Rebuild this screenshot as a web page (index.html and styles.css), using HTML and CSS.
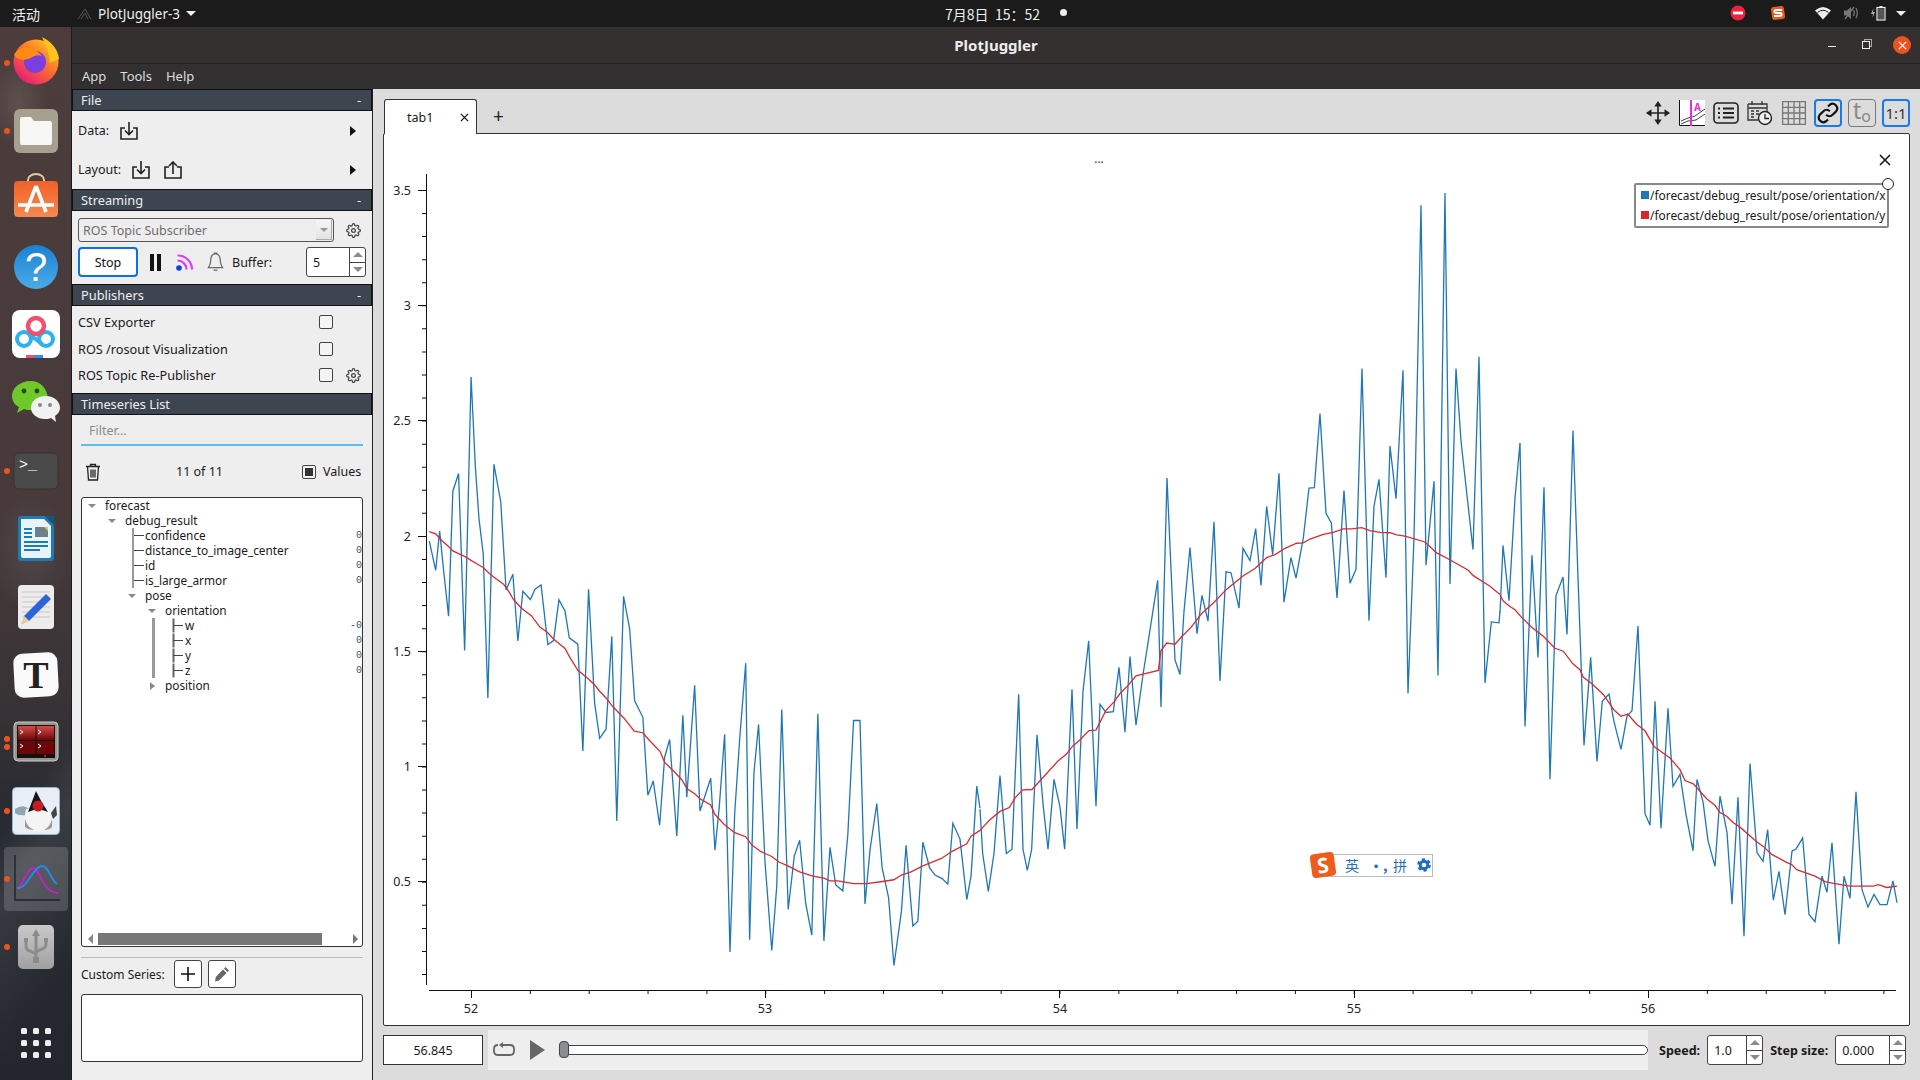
FILE: index.html
```html
<!DOCTYPE html>
<html lang="zh">
<head>
  <meta charset="UTF-8">
  <title>PlotJuggler</title>
  <link rel="stylesheet" href="styles.css">
</head>
<body>
  <!-- shared icons -->
  <svg class="defs">
    <defs>
      <linearGradient id="ffGrad" x1="1" y1="0" x2="0.2" y2="1">
        <stop offset="0" stop-color="#ffd91f"/><stop offset="0.5" stop-color="#ff6f2c"/><stop offset="1" stop-color="#e3177f"/>
      </linearGradient>
      <linearGradient id="shopGrad" x1="0" y1="0" x2="0" y2="1">
        <stop offset="0" stop-color="#f0602a"/><stop offset="1" stop-color="#f58a4f"/>
      </linearGradient>
      <linearGradient id="helpGrad" x1="0" y1="0" x2="0" y2="1">
        <stop offset="0" stop-color="#1b82d2"/><stop offset="1" stop-color="#4cabe8"/>
      </linearGradient>
      <linearGradient id="paneGrad" x1="0" y1="0" x2="0" y2="1">
        <stop offset="0" stop-color="#d84a4a"/><stop offset="1" stop-color="#6d0606"/>
      </linearGradient>
      <linearGradient id="usbGrad" x1="0" y1="0" x2="0" y2="1">
        <stop offset="0" stop-color="#c9c9c9"/><stop offset="1" stop-color="#a0a0a0"/>
      </linearGradient>
    </defs>
    <symbol id="gear" viewBox="0 0 24 24">
      <circle cx="12" cy="12" r="3" fill="none" stroke="currentColor" stroke-width="2"/>
      <path fill="none" stroke="currentColor" stroke-width="2" d="M19.4 15a1.65 1.65 0 0 0 .33 1.82l.06.06a2 2 0 0 1 0 2.83 2 2 0 0 1-2.83 0l-.06-.06a1.65 1.65 0 0 0-1.82-.33 1.65 1.65 0 0 0-1 1.51V21a2 2 0 0 1-2 2 2 2 0 0 1-2-2v-.09A1.65 1.65 0 0 0 9 19.4a1.65 1.65 0 0 0-1.82.33l-.06.06a2 2 0 0 1-2.83 0 2 2 0 0 1 0-2.83l.06-.06a1.65 1.65 0 0 0 .33-1.82 1.65 1.65 0 0 0-1.51-1H3a2 2 0 0 1-2-2 2 2 0 0 1 2-2h.09A1.65 1.65 0 0 0 4.6 9a1.65 1.65 0 0 0-.33-1.82l-.06-.06a2 2 0 0 1 0-2.83 2 2 0 0 1 2.83 0l.06.06a1.65 1.65 0 0 0 1.82.33H9a1.65 1.65 0 0 0 1-1.51V3a2 2 0 0 1 2-2 2 2 0 0 1 2 2v.09a1.65 1.65 0 0 0 1 1.51 1.65 1.65 0 0 0 1.82-.33l.06-.06a2 2 0 0 1 2.83 0 2 2 0 0 1 0 2.83l-.06.06a1.65 1.65 0 0 0-.33 1.82V9a1.65 1.65 0 0 0 1.51 1H21a2 2 0 0 1 2 2 2 2 0 0 1-2 2h-.09a1.65 1.65 0 0 0-1.51 1z"/>
    </symbol>
    <symbol id="tray-in" viewBox="0 0 18 18">
      <path fill="none" stroke="#222" stroke-width="1.6" d="M5 6H1V17H17V6H13M9 0V12.5M5 8.5L9 12.5L13 8.5"/>
    </symbol>
    <symbol id="tray-out" viewBox="0 0 18 18">
      <path fill="none" stroke="#222" stroke-width="1.6" d="M5 6H1V17H17V6H13M9 13V1M5 5L9 1L13 5"/>
    </symbol>
  </svg>

  <header class="topbar">
    <span class="top-activities">活动</span>
    <svg class="top-appicon" viewBox="0 0 14 12"><path fill="none" stroke="#555" d="M0 11L7 1L13 11M3 11L7 5L10 11"/></svg>
    <span class="top-app">PlotJuggler-3</span>
    <span class="caret"></span>
    <span class="top-clock">7月8日&nbsp;&nbsp;15：52</span>
    <span class="top-dot"></span>
    <div class="tray">
      <svg class="tray-ic" viewBox="0 0 16 16"><circle cx="8" cy="8" r="7.5" fill="#e8243f"/><rect x="3" y="6.6" width="10" height="2.8" fill="#fff"/></svg>
      <svg class="tray-ic sogou-tray" viewBox="0 0 16 16"><rect x="1.5" y="1.5" width="13" height="13" rx="2.5" fill="#ea5a1e" transform="rotate(-8 8 8)"/><path fill="none" stroke="#fff" stroke-width="2" d="M12 5H6Q4 5 4.500 7Q5 8 8 8H10Q12 8 11.500 10Q11 11 9 11H4"/></svg>
      <svg class="tray-ic wifi" viewBox="0 0 16 14"><path fill="#eee" d="M0 4.500Q8 -2.500 16 4.500L8 13.500z"/><path fill="none" stroke="#1c1c1c" d="M2.500 6.500Q8 2 13.500 6.500"/></svg>
      <svg class="tray-ic mute" viewBox="0 0 16 16"><path fill="#777" d="M1 5.500H4L8 2V14L4 10.500H1z"/><path fill="none" stroke="#777" stroke-width="1.300" d="M10.500 5Q12 8 10.500 11M13 3Q15.500 8 13 13M2 14L11 2"/></svg>
      <svg class="tray-ic batt" viewBox="0 0 16 16"><path fill="#aaa" d="M2.500 3L0 9H2L1.500 13L4 7H2z"/><rect x="6" y="2.500" width="8" height="12.500" fill="none" stroke="#eee" stroke-width="1.200"/><rect x="8.500" y="1" width="3" height="1.500" fill="#eee"/><rect x="7" y="3.500" width="6" height="10.500" fill="#ddd" opacity=".3"/></svg>
      <span class="caret"></span>
    </div>
  </header>

  <div class="desk">
    <nav class="dock">
      <div class="dock-item running first">
        <svg class="dock-ic" viewBox="0 0 56 56">
          <circle cx="28" cy="29" r="22.500" fill="url(#ffGrad)"/>
          <path fill="#ffc21f" d="M34 4C42 8 50 15 51 26L42 30C41 20 38 12 34 4z"/>
          <circle cx="27" cy="29" r="11" fill="#7a3fdc"/>
          <path fill="#ff8a14" d="M6 22C10 14 18 13 24 16C29 18 32 20 34 23C29 21 25 24 20 26C14 28 9 26 6 22z"/>
        </svg>
      </div>
      <div class="dock-item running">
        <svg class="dock-ic" viewBox="0 0 56 56">
          <rect x="6" y="6" width="44" height="44" rx="6" fill="#a5a08f"/>
          <path fill="#f7f7f5" d="M12 16a2 2 0 0 1 2-2h9l3 4h16a2 2 0 0 1 2 2v20a2 2 0 0 1-2 2H14a2 2 0 0 1-2-2z"/>
        </svg>
      </div>
      <div class="dock-item">
        <svg class="dock-ic" viewBox="0 0 56 56">
          <path fill="none" stroke="#e8c9a0" stroke-width="2" d="M20 11V9A8 6 0 0 1 36 9V11"/>
          <rect x="6" y="10" width="44" height="36" rx="4" fill="url(#shopGrad)"/>
          <path fill="none" stroke="#fff" stroke-width="3.600" d="M28 15L18 41M28 15L38 41M10 34H46"/>
        </svg>
      </div>
      <div class="dock-item">
        <svg class="dock-ic" viewBox="0 0 56 56">
          <circle cx="28" cy="28" r="22" fill="url(#helpGrad)"/>
          <text class="help-mark" x="28" y="42" text-anchor="middle">?</text>
        </svg>
      </div>
      <div class="dock-item">
        <svg class="dock-ic" viewBox="0 0 56 56">
          <rect x="4" y="3" width="48" height="48" rx="8" fill="#fff"/>
          <circle cx="16" cy="32" r="7" fill="none" stroke="#2eb2ef" stroke-width="4"/>
          <circle cx="38" cy="32" r="7" fill="none" stroke="#2eb2ef" stroke-width="4"/>
          <path fill="none" stroke="#2eb2ef" stroke-width="4" d="M21 27L34 37"/>
          <circle cx="28" cy="19" r="8" fill="none" stroke="#f0506e" stroke-width="4.500"/>
          <rect x="18" y="48" width="8" height="3" fill="#f0506e"/><rect x="26" y="48" width="9" height="3" fill="#2e8fef"/>
        </svg>
      </div>
      <div class="dock-item">
        <svg class="dock-ic wechat" viewBox="0 0 56 56">
          <path fill="#6fc92b" d="M23 5C12 5 4 12 4 20C4 25 7 29 11 31L9 37L16 33C18 34 21 34 24 34L40 22C39 12 32 5 23 5z"/>
          <circle cx="16" cy="15" r="2.400" fill="#1d4d10"/><circle cx="29" cy="15" r="2.400" fill="#1d4d10"/>
          <path fill="#f1f1f1" d="M38 20C28 20 23 26 23 32C23 38 29 43 37 43C39 43 41 43 43 42L48 46L47 40C50 38 52 35 52 32C52 25 46 20 38 20z"/>
          <circle cx="32" cy="29" r="2" fill="#888"/><circle cx="42" cy="29" r="2" fill="#888"/>
        </svg>
      </div>
      <div class="dock-item running">
        <svg class="dock-ic" viewBox="0 0 56 56">
          <rect x="6" y="10" width="44" height="36" rx="5" fill="#4a4a4a" stroke="#333"/>
          <text class="term-mark" x="11" y="26">&gt;_</text>
        </svg>
      </div>
      <div class="dock-item">
        <svg class="dock-ic" viewBox="0 0 56 56">
          <path fill="#1c7cb5" d="M12 5H37L46 14V47A3 3 0 0 1 43 50H13A3 3 0 0 1 10 47V8A3 3 0 0 1 12 5z"/>
          <path fill="#e9f3fa" d="M13 8H36L43 15V45Q43 47 41 47H15Q13 47 13 45z"/>
          <path fill="#13577f" d="M38 5H46V14z"/>
          <path fill="none" stroke="#1c7cb5" stroke-width="1.800" d="M16 18H24M16 22H24M16 26H24M16 31H40M16 35H40M16 39H32"/>
          <rect x="27" y="16" width="13" height="10" fill="#6b7f8c"/><path fill="#e8c23a" d="M36 16H40V20z"/>
        </svg>
      </div>
      <div class="dock-item">
        <svg class="dock-ic" viewBox="0 0 56 56">
          <rect x="10" y="6" width="36" height="44" rx="4" fill="#ececec"/>
          <path fill="none" stroke="#c8c8c8" d="M14 13H42M14 18H42M14 23H42M14 28H42M14 33H42M14 38H42"/>
          <path fill="#2d62d8" d="M38 15L43 20L21 42L16 37z"/><path fill="#e9c99a" d="M16 37L21 42L13 46z"/>
        </svg>
      </div>
      <div class="dock-item">
        <svg class="dock-ic" viewBox="0 0 56 56">
          <rect x="6" y="6" width="44" height="44" rx="9" fill="#fafafa" transform="rotate(-3 28 28)"/>
          <text class="type-mark" x="28" y="41" text-anchor="middle">T</text>
        </svg>
      </div>
      <div class="dock-item running twin">
        <svg class="dock-ic" viewBox="0 0 56 56">
          <rect x="6" y="7" width="44" height="39" rx="4" fill="#9a958c" stroke="#ccc"/>
          <rect x="9" y="10" width="38" height="33" fill="#111"/>
          <rect x="10" y="11" width="17.500" height="14" fill="url(#paneGrad)"/><rect x="28.500" y="11" width="17.500" height="14" fill="url(#paneGrad)"/>
          <rect x="10" y="26" width="17.500" height="13" fill="#6d0606"/><rect x="28.500" y="26" width="17.500" height="13" fill="#6d0606"/>
          <circle cx="37" cy="41" r="1" fill="#f22"/>
          <path fill="none" stroke="#fff" d="M12 15L15 17L12 19M30 15L33 17L30 19M12 29L15 31L12 33M30 29L33 31L30 33"/>
        </svg>
      </div>
      <div class="dock-item running">
        <svg class="dock-ic" viewBox="0 0 56 56">
          <rect x="4.500" y="4.500" width="47" height="47" rx="4" fill="#e8eef6" stroke="#9db4cc"/>
          <path fill="#8fa5b5" d="M7 26Q14 21 20 25L18 32Q10 33 7 30z"/>
          <path fill="#f4f4f4" d="M18 26H40Q45 36 44 44Q38 48 30 48Q22 48 17 44Q16 34 18 26z"/>
          <path fill="#9a9a9a" d="M17 36Q19 44 26 47Q20 47 17 44zM44 36Q42 44 36 47Q42 47 44 44z"/>
          <path fill="#15151b" d="M20 29L28 8Q33 19 40 29Q30 24 20 29z"/>
          <circle cx="30" cy="23" r="5.500" fill="#c41e24"/>
          <path fill="#444" d="M43 30L48 23L49 32L45 36z"/>
        </svg>
      </div>
      <div class="dock-item running active">
        <svg class="dock-ic" viewBox="-4 -4 64 64">
          <path fill="none" stroke="#2b2d3a" stroke-width="1.800" d="M7 4V49H52"/>
          <path fill="none" stroke="#c81ed0" stroke-width="1.800" d="M9 37C15 36 18 18 25 17C32 16 33 41 50 42"/>
          <path fill="none" stroke="#1e8cf0" stroke-width="1.800" d="M9 37C20 38 25 15 34 15C41 15 43 30 49 33"/>
        </svg>
      </div>
      <div class="dock-item running">
        <svg class="dock-ic" viewBox="0 0 56 56">
          <rect x="10" y="6" width="36" height="44" rx="5" fill="url(#usbGrad)"/>
          <path fill="none" stroke="#8b8b8b" stroke-width="3" d="M28 16V40M18 22V27Q18 31 22 32L28 35M38 22V25Q38 29 34 30L28 33"/>
          <path fill="#8b8b8b" d="M28 10L32 17H24zM25 38H31V44H25zM16 19H20V23H16zM36 19H40V23H36z"/>
        </svg>
      </div>
      <div class="dock-item apps">
        <svg class="dock-ic" viewBox="0 0 56 56">
          <g fill="#eee">
            <rect x="13" y="13" width="6" height="6" rx="1.500"/><rect x="25" y="13" width="6" height="6" rx="1.500"/><rect x="37" y="13" width="6" height="6" rx="1.500"/>
            <rect x="13" y="25" width="6" height="6" rx="1.500"/><rect x="25" y="25" width="6" height="6" rx="1.500"/><rect x="37" y="25" width="6" height="6" rx="1.500"/>
            <rect x="13" y="37" width="6" height="6" rx="1.500"/><rect x="25" y="37" width="6" height="6" rx="1.500"/><rect x="37" y="37" width="6" height="6" rx="1.500"/>
          </g>
        </svg>
      </div>
    </nav>

    <div class="window">
      <div class="titlebar">
        <span></span>
        <span class="title">PlotJuggler</span>
        <div class="win-buttons">
          <span class="win-min"></span>
          <span class="win-max"></span>
          <span class="win-close">
            <svg viewBox="0 0 10 10"><path fill="none" stroke="#fff" stroke-width="1.400" d="M1 1L9 9M9 1L1 9"/></svg>
          </span>
        </div>
      </div>
      <div class="menubar">
        <span>App</span><span>Tools</span><span>Help</span>
      </div>

      <div class="content">
        <aside class="side">
          <div class="sec-head"><span>File</span><span>-</span></div>
          <div class="file-row">
            <span>Data:</span>
            <svg class="tray-btn data-btn"><use href="#tray-in"/></svg>
            <span class="more"></span>
          </div>
          <div class="file-row">
            <span>Layout:</span>
            <svg class="tray-btn layout-btn"><use href="#tray-in"/></svg>
            <svg class="tray-btn layout-btn"><use href="#tray-out"/></svg>
            <span class="more"></span>
          </div>

          <div class="sec-head"><span>Streaming</span><span>-</span></div>
          <div class="stream-top">
            <div class="combo"><span>ROS Topic Subscriber</span><span class="combo-arrow"></span></div>
            <svg class="gear"><use href="#gear"/></svg>
          </div>
          <div class="stream-ctrl">
            <button class="stop">Stop</button>
            <span class="pause"></span>
            <svg class="live" viewBox="0 0 20 20">
              <circle cx="4" cy="16" r="2.800" fill="#0b3cf0"/>
              <path fill="none" stroke="#e23af0" stroke-width="2.200" d="M2.500 8.500A9 9 0 0 1 11.500 17.500M2.500 3.500A14 14 0 0 1 17 17.500"/>
            </svg>
            <svg class="bell" viewBox="0 0 18 22">
              <path fill="none" stroke="#666" stroke-width="1.300" d="M9 2.500C5 2.500 4 6 4 9C4 13 3 15 1.500 17H16.500C15 15 14 13 14 9C14 6 13 2.500 9 2.500zM7 1.500H11M7 19.500H11"/>
            </svg>
            <span class="buffer-label">Buffer:</span>
            <div class="spin buffer-spin">
              <span class="spin-val">5</span>
              <span class="spin-btns"><i class="up"></i><i class="down"></i></span>
            </div>
          </div>

          <div class="sec-head"><span>Publishers</span><span>-</span></div>
          <div class="pub-list">
            <div class="pub-row"><span>CSV Exporter</span><span class="check"></span></div>
            <div class="pub-row"><span>ROS /rosout Visualization</span><span class="check"></span></div>
            <div class="pub-row"><span>ROS Topic Re-Publisher</span><span class="check"></span><svg class="gear pub-gear"><use href="#gear"/></svg></div>
          </div>

          <div class="sec-head plain"><span>Timeseries List</span></div>
          <div class="filter">Filter...</div>
          <div class="list-ctrl">
            <svg class="trash" viewBox="0 0 16 18">
              <path fill="none" stroke="#222" stroke-width="1.300" d="M1 3.500H15M5.500 3.500V1.500H10.500V3.500M2.500 3.500L3.500 17H12.500L13.500 3.500M6 6.500V14.500M8 6.500V14.500M10 6.500V14.500"/>
            </svg>
            <span class="count">11 of 11</span>
            <span class="check checked"></span>
            <span class="values">Values</span>
          </div>

          <div class="tree">
            <div class="rows">
              <div class="row d0"><i class="arrow"></i>forecast</div>
              <div class="row d1"><i class="arrow"></i>debug_result</div>
              <div class="row d2 leaf">confidence<span class="val">0</span></div>
              <div class="row d2 leaf">distance_to_image_center<span class="val">0</span></div>
              <div class="row d2 leaf">id<span class="val">0</span></div>
              <div class="row d2 leaf">is_large_armor<span class="val">0</span></div>
              <div class="row d2"><i class="arrow"></i>pose</div>
              <div class="row d3"><i class="arrow"></i>orientation</div>
              <div class="row d4 leaf">w<span class="val">-0</span></div>
              <div class="row d4 leaf">x<span class="val">0</span></div>
              <div class="row d4 leaf">y<span class="val">0</span></div>
              <div class="row d4 leaf last">z<span class="val">0</span></div>
              <div class="row d3"><i class="arrow closed"></i>position</div>
            </div>
            <div class="hscroll">
              <i class="sb-left"></i>
              <span class="sb-thumb"></span>
              <i class="sb-right"></i>
            </div>
          </div>
          <div class="sep"></div>
          <div class="custom">
            <span class="custom-label">Custom Series:</span>
            <span class="tool-btn">
              <svg viewBox="0 0 16 16"><path fill="none" stroke="#111" stroke-width="1.600" d="M8 1V15M1 8H15"/></svg>
            </span>
            <span class="tool-btn">
              <svg viewBox="0 0 16 16"><path fill="#666" d="M11.500 1L15 4.500L13.500 6L10 2.500zM9 3.500L12.500 7L5 14.500L1 15.500L1.800 11z"/></svg>
            </span>
          </div>
          <div class="custom-list"></div>
        </aside>

        <main class="work">
          <div class="tabbar">
            <div class="tab">
              <span>tab1</span>
              <svg class="tab-x" viewBox="0 0 10 10"><path fill="none" stroke="#111" stroke-width="1.400" d="M1 1L9 9M9 1L1 9"/></svg>
            </div>
            <span class="tab-add">+</span>
            <div class="tools">
              <span class="t-ic">
                <svg viewBox="0 0 28 28"><path fill="none" stroke="#222" stroke-width="1.800" d="M14 3V25M3 14H25"/><path fill="#222" d="M14 1L18 7H10zM14 27L18 21H10zM1 14L7 10V18zM27 14L21 10V18z"/></svg>
              </span>
              <span class="t-ic">
                <svg viewBox="0 0 26 26"><rect width="26" height="26" fill="#fff"/><path fill="none" stroke="#111" stroke-width="1" d="M.5 0V25.500H26"/><path fill="none" stroke="#444" stroke-width="1" d="M2 21L9 18L16 16L26 9M2 24L9 21L17 20L26 14"/><path fill="none" stroke="#e62de6" stroke-width="2" d="M12 0V26"/><text class="chart-a" x="15" y="11">A</text></svg>
              </span>
              <span class="t-ic">
                <svg viewBox="0 0 26 22"><rect x="1" y="1" width="24" height="20" rx="3.500" fill="none" stroke="#222" stroke-width="1.600"/><path fill="none" stroke="#222" stroke-width="2" d="M5 6.500H7M10 6.500H21M5 11H7M10 11H21M5 15.500H7M10 15.500H21"/></svg>
              </span>
              <span class="t-ic">
                <svg viewBox="0 0 26 26"><path fill="none" stroke="#333" stroke-width="1.300" d="M1 4H20V12M1 4V20H11M1 8H20M5 1V5M15 1V5M4 11H7M9 11H12M4 14H7M9 14H12M4 17H7"/><circle cx="18" cy="18" r="6.500" fill="#eee" stroke="#222" stroke-width="1.400"/><path fill="none" stroke="#222" stroke-width="1.300" d="M18 14V18.500H22"/></svg>
              </span>
              <span class="t-ic">
                <svg viewBox="0 0 24 24"><path fill="none" stroke="#777" stroke-width="1.200" d="M1.500 1.500H22.500V22.500H1.500zM6.750 1.500V22.500M12 1.500V22.500M17.250 1.500V22.500M1.500 6.750H22.500M1.500 12H22.500M1.500 17.250H22.500"/></svg>
              </span>
              <span class="t-ic boxed on">
                <svg viewBox="0 0 24 24"><path fill="none" stroke="#111" stroke-width="2.400" d="M10 14A5 5 0 0 0 17 14L21 10A5 5 0 0 0 14 3L12 5M14 10A5 5 0 0 0 7 10L3 14A5 5 0 0 0 10 21L12 19"/></svg>
              </span>
              <span class="t-ic boxed off"><span class="t-zero">t<small>o</small></span></span>
              <span class="t-ic boxed on"><span class="t-ratio">1:1</span></span>
            </div>
          </div>

          <div class="frame">
            <svg class="plot" viewBox="383 133 1527 893">
              <!-- axes -->
              <g class="axis">
                <path d="M426.500 174V985M429 990.500H1896"/>
                <path d="M418 190.500H426M418 305.500H426M418 420.500H426M418 536.500H426M418 651.500H426M418 766.500H426M418 881.500H426"/>
                <path d="M471.500 990V998M765.500 990V998M1059.500 990V998M1354.500 990V998M1648.500 990V998"/>
                <line class="minor-y" x1="424" y1="190" x2="424" y2="975" stroke-width="4"/>
                <line class="minor-x" x1="471" y1="992" x2="1896" y2="992" stroke-width="4"/>
              </g>
              <g class="ticks-y" text-anchor="end">
                <text x="411" y="195">3.5</text>
                <text x="411" y="310">3</text>
                <text x="411" y="425">2.5</text>
                <text x="411" y="541">2</text>
                <text x="411" y="656">1.5</text>
                <text x="411" y="771">1</text>
                <text x="411" y="886">0.5</text>
              </g>
              <g class="ticks-x" text-anchor="middle">
                <text x="471" y="1013">52</text>
                <text x="765" y="1013">53</text>
                <text x="1060" y="1013">54</text>
                <text x="1354" y="1013">55</text>
                <text x="1648" y="1013">56</text>
              </g>
              <text class="dots" x="1099" y="163" text-anchor="middle">...</text>

              <!-- series x -->
              <g class="line-x">
                <polyline transform="translate(420 360) scale(.35714 .39526)" points="26,458 44,532 55,433 67,540 80,648 92,332 108,287 125,735 143,43 155,270 165,400 177,490 190,855 207,264 226,358 241,582 260,542 274,711 288,585 309,606 322,580 339,569 358,720 374,710 389,607 406,635 418,703 442,719 456,989 472,580 489,868 503,957 521,934 537,699 551,1166 570,598 587,680 601,862 624,904 638,1101 653,1065 671,1177 685,1005 699,960 719,1204 736,899 747,1106 769,823 784,1141 814,1058 826,1240 838,1130 853,947 868,1498 881,1150 895,960 912,767 923,1467 935,1045 948,922 966,1270 985,1494 999,1330 1013,884 1031,1390 1048,1255 1063,1215 1080,1375 1097,1455 1114,895 1131,1470 1148,1233 1164,1328 1184,1343 1198,1200 1214,912 1232,912 1246,1376 1260,1240 1279,1122 1294,1285 1312,1360 1327,1532 1348,1395 1361,1228 1380,1432 1394,1420 1408,1220 1427,1285 1442,1303 1462,1312 1478,1326 1492,1172 1512,1212 1531,1365 1543,1305 1559,1078 1568,1134"/>
                <polyline transform="translate(980 180) scale(.33333 .42092)" points="0,1495 8,1600 25,1690 42,1600 60,1415 79,1600 96,1590 116,1222 129,1590 142,1640 155,1590 171,1318 190,1490 204,1590 222,1424 240,1490 254,1590 276,1210 291,1542 309,1215 326,1095 348,1488 360,1246 378,1265 400,1263 417,1158 435,1312 450,1132 468,1295 490,1170 505,1095 533,951 543,1252 561,708 585,1140 600,1175 612,1025 630,873 651,1078 666,987 684,1048 702,812 720,1190 738,931 753,933 777,1017 789,875 810,904 827,828 843,963 860,775 878,890 897,697 912,1003 933,897 948,946 970,850 987,732 1003,731 1020,555 1038,792 1054,815 1071,993 1092,738 1110,958 1128,925 1146,448 1167,1047 1182,775 1197,711 1218,945 1230,632 1248,757 1269,452 1284,1220 1302,850 1323,60 1338,915 1362,716 1374,1177 1395,31 1410,960 1428,448 1443,620 1479,878 1497,420 1515,1195 1534,1050 1557,1052 1560,1025"/>
                <polyline transform="translate(1500 400) scale(.33333 .36352)" points="0,585 9,400 27,552 45,270 60,118 75,898 96,427 114,708 132,240 150,1043 168,538 189,487 201,645 219,84 234,490 252,950 272,708 291,994 307,828 327,809 342,885 363,961 381,870 396,855 414,622 435,1138 450,1170 465,829 483,1178 504,848 519,1063 540,1030 558,1140 579,1240 591,1044 609,1105 624,1212 645,1283 660,1090 681,1190 696,1387 714,1093 732,1475 750,1000 771,1245 789,1269 803,1182 820,1376 837,1297 855,1416 876,1241 888,1235 908,1205 927,1415 945,1435 966,1310 981,1354 996,1218 1017,1497 1032,1310 1050,1371 1068,1078 1086,1347 1104,1395 1122,1360 1140,1388 1161,1388 1179,1323 1191,1383"/>
              </g>
              <!-- series y -->
              <g class="line-y">
                <polyline transform="translate(420 360) scale(.35714 .39526)" points="26,434 44,440 62,458 80,472 92,483 108,490 125,497 143,507 160,516 177,525 195,541 212,553 234,567 248,585 262,606 282,626 296,636 312,647 335,675 358,690 374,706 389,717 406,730 420,753 442,785 470,806 490,823 503,838 521,855 541,878 570,905 600,939 624,943 640,960 672,990 685,1018 710,1040 733,1062 748,1085 770,1098 784,1110 814,1126 826,1150 852,1175 881,1196 912,1206 930,1228 955,1244 985,1256 1005,1270 1030,1280 1063,1295 1100,1306 1131,1311 1148,1318 1170,1318 1214,1325 1250,1325 1290,1320 1327,1315 1348,1303 1375,1295 1408,1280 1460,1261 1490,1243 1531,1224 1543,1205 1568,1190"/>
                <polyline transform="translate(980 180) scale(.33333 .42092)" points="0,1545 28,1521 60,1500 88,1491 105,1468 128,1449 156,1448 200,1410 234,1380 258,1365 278,1345 300,1330 327,1308 348,1307 378,1260 402,1240 420,1220 445,1200 468,1178 535,1165 543,1118 560,1100 585,1103 605,1085 633,1063 665,1030 700,1005 740,972 790,940 825,923 860,897 885,890 915,875 950,863 970,862 990,853 1030,842 1060,837 1090,829 1115,829 1145,826 1170,833 1200,837 1230,838 1250,843 1275,846 1335,860 1370,886 1400,898 1465,927 1480,940 1530,965 1560,985"/>
                <polyline transform="translate(1500 400) scale(.33333 .36352)" points="0,537 10,553 30,568 45,577 65,598 95,625 130,650 165,683 190,691 218,725 240,742 250,763 275,780 310,810 342,853 363,870 383,864 410,892 435,910 462,953 510,985 540,1017 555,1047 580,1056 620,1097 645,1115 660,1135 680,1145 700,1163 720,1175 770,1215 790,1228 815,1250 860,1272 875,1278 890,1292 945,1310 975,1325 1000,1330 1050,1337 1120,1337 1135,1333 1160,1341 1191,1337"/>
              </g>
            </svg>

            <svg class="plot-close" viewBox="0 0 12 12"><path fill="none" stroke="#111" stroke-width="1.500" d="M1 1L11 11M11 1L1 11"/></svg>

            <div class="legend">
              <div class="legend-row"><i class="sw-x"></i>/forecast/debug_result/pose/orientation/x</div>
              <div class="legend-row"><i class="sw-y"></i>/forecast/debug_result/pose/orientation/y</div>
              <span class="legend-knob"></span>
            </div>

            <div class="ime">
              <span class="ime-logo">S</span>
              <div class="ime-bar">
                <span>英</span>
                <span class="ime-punct">•,</span>
                <span>拼</span>
                <svg viewBox="0 0 24 24"><circle cx="12" cy="12" r="6.500" fill="none" stroke="#1b6fc2" stroke-width="5"/><circle cx="12" cy="12" r="10" fill="none" stroke="#1b6fc2" stroke-width="3.500" stroke-dasharray="5.500 5"/></svg>
              </div>
            </div>
          </div>

          <div class="bottom">
            <div class="time-box">56.845</div>
            <div class="player">
              <svg class="loop" viewBox="0 0 22 16"><path fill="none" stroke="#666" stroke-width="1.800" d="M7 3H17Q21 3 21 7V9Q21 13 17 13H5Q1 13 1 9V7Q1 3 5 3"/><path fill="#666" d="M10 0L6 3L10 6z"/></svg>
              <svg class="play" viewBox="0 0 15 20"><path fill="#666" d="M0 0L15 10L0 20z"/></svg>
              <div class="slider"><span class="handle"></span></div>
            </div>
            <span class="b-label speed-label">Speed:</span>
            <div class="spin speed-spin">
              <span class="spin-val">1.0</span>
              <span class="spin-btns"><i class="up"></i><i class="down"></i></span>
            </div>
            <span class="b-label step-label">Step size:</span>
            <div class="spin step-spin">
              <span class="spin-val">0.000</span>
              <span class="spin-btns"><i class="up"></i><i class="down"></i></span>
            </div>
          </div>
        </main>
      </div>
    </div>
  </div>
</body>
</html>
```

FILE: styles.css
```css
/* Page */
html, body {
  margin: 0;
  padding: 0;
  width: 1920px;
  height: 1080px;
  overflow: hidden;
}
body {
  font-family: "Noto Sans", "Noto Sans CJK SC", sans-serif;
  font-size: 13px;
  color: #1a1a1a;
  background: #222;
}
.defs {
  position: absolute;
  width: 0;
  height: 0;
}

/* Top bar */
.topbar {
  height: 27px;
  background: #1b1b1b;
  color: #eee;
  display: flex;
  align-items: center;
  font-size: 14px;
}
.top-activities {
  margin-left: 12px;
  font-family: "Noto Sans CJK SC", sans-serif;
  width: 64px;
}
.top-appicon {
  width: 14px;
  height: 12px;
  margin-left: 2px;
}
.top-app {
  margin-left: 6px;
  font-size: 13.500px;
}
.caret {
  width: 0;
  height: 0;
  margin-left: 6px;
  border-left: 5px solid transparent;
  border-right: 5px solid transparent;
  border-top: 5px solid #eee;
}
.top-clock {
  margin-left: 749px;
  font-family: "Noto Sans CJK SC", sans-serif;
  width: 115px;
  font-size: 14px;
  white-space: nowrap;
}
.top-dot {
  width: 7px;
  height: 7px;
  border-radius: 50%;
  background: #eee;
  margin-bottom: 2px;
}
.tray {
  margin-left: auto;
  display: flex;
  align-items: center;
  margin-right: 14px;
}
.tray .caret { margin-left: 9px; }
.tray-ic {
  width: 16px;
  height: 16px;
  margin-bottom: 2px;
}
.sogou-tray { margin-left: 24px; }
.wifi { margin-left: 29px; }
.mute { margin-left: 12px; }
.batt { margin-left: 12px; }

/* Dock */
.desk {
  display: flex;
  height: 1053px;
}
.dock {
  width: 72px;
  flex: none;
  padding-top: 2px;
  box-sizing: border-box;
  background:
    radial-gradient(ellipse 30px 45px at 18px 75px, rgba(255,255,255,0.10), transparent),
    radial-gradient(ellipse 40px 60px at 30px 525px, rgba(255,255,255,0.07), transparent),
    linear-gradient(125deg, transparent 70%, rgba(255,255,255,0.08) 76%, transparent 90%),
    linear-gradient(180deg, #4c3d3c 0, #483a3b 45%, #3a3436 62%, #282b31 75%, #23272d 100%);
  border-right: 1px solid #1a1a1a;
}
.dock-item {
  height: 68px;
  display: flex;
  align-items: center;
  justify-content: center;
  position: relative;
}
.dock-ic {
  width: 56px;
  height: 56px;
}
.first .dock-ic { margin-top: -4px; }
.wechat { margin-top: 2px; }
.running::before {
  content: "";
  position: absolute;
  left: 4px;
  top: 31px;
  width: 6px;
  height: 6px;
  border-radius: 50%;
  background: #e95420;
}
.twin::after {
  content: "";
  position: absolute;
  left: 4px;
  top: 35px;
  width: 6px;
  height: 6px;
  border-radius: 50%;
  background: #e95420;
}
.twin::before { top: 27px; }
.active .dock-ic {
  width: 64px;
  height: 64px;
  border-radius: 4px;
  background: rgba(255,255,255,0.16);
}
.apps { margin-top: 28px; }
.help-mark {
  font-family: "Liberation Sans", sans-serif;
  font-size: 40px;
  fill: #fff;
}
.term-mark {
  font-family: "Liberation Mono", monospace;
  font-size: 15px;
  fill: #fff;
}
.type-mark {
  font-family: "Liberation Serif", serif;
  font-size: 38px;
  font-weight: bold;
  fill: #222;
}

/* Window chrome */
.window {
  flex: 1;
  display: flex;
  flex-direction: column;
  min-width: 0;
}
.titlebar {
  height: 36px;
  background: #33302f;
  border-bottom: 1px solid #222;
  color: #eee;
  display: grid;
  grid-template-columns: 1fr auto 1fr;
  align-items: center;
}
.title {
  font-size: 15px;
  font-weight: bold;
}
.win-buttons {
  display: flex;
  align-items: center;
  justify-content: flex-end;
  padding-right: 9px;
}
.win-min {
  width: 8px;
  height: 1px;
  background: #eee;
  margin-top: 3px;
}
.win-max {
  width: 6px;
  height: 6px;
  border: 1px solid #eee;
  margin-left: 26px;
  box-shadow: 2px -2px 0 -1px #33302f, 2px -2px 0 0 #aaa;
}
.win-close {
  width: 18px;
  height: 18px;
  margin-left: 23px;
  border-radius: 50%;
  background: #e95420;
  display: flex;
  align-items: center;
  justify-content: center;
}
.win-close svg {
  width: 9px;
  height: 9px;
}
.menubar {
  height: 23px;
  padding: 0 0 2px 10px;
  background: #312f2f;
  color: #ddd;
  display: flex;
  align-items: center;
  gap: 14px;
  font-size: 13px;
}

/* Left panel */
.content {
  flex: 1;
  display: flex;
  min-height: 0;
}
.side {
  width: 300px;
  flex: none;
  background: #eee;
  border-right: 1px solid #222;
}
.sec-head {
  height: 22px;
  box-sizing: border-box;
  background: #3d4650;
  border: 1px solid #111;
  color: #eee;
  display: flex;
  align-items: center;
  justify-content: space-between;
  padding: 0 10px 0 8px;
  font-size: 12.800px;
}
.file-row {
  height: 39px;
  display: flex;
  align-items: center;
  padding: 0 16px 0 6px;
  font-size: 12.500px;
}
.tray-btn {
  width: 18px;
  height: 18px;
}
.data-btn { margin-left: 11px; }
.layout-btn { margin-left: 11px; }
.layout-btn + .layout-btn { margin-left: 14px; }
.more {
  margin-left: auto;
  width: 0;
  height: 0;
  border-top: 5px solid transparent;
  border-bottom: 5px solid transparent;
  border-left: 6px solid #111;
}
.stream-top {
  display: flex;
  align-items: center;
  padding: 7px 0 0 6px;
}
.combo {
  width: 256px;
  height: 24px;
  box-sizing: border-box;
  border: 1px solid #555;
  border-radius: 3px;
  background: #ededed;
  color: #6d6d6d;
  display: flex;
  align-items: center;
  justify-content: space-between;
  padding-left: 4px;
  font-size: 12.500px;
}
.combo-arrow {
  width: 16px;
  height: 20px;
  margin-right: 1px;
  background: linear-gradient(#f6f6f6, #e2e2e2);
  border-right: 1px solid #aaa;
  border-bottom: 1px solid #aaa;
  box-sizing: border-box;
  display: flex;
  align-items: center;
  justify-content: center;
}
.combo-arrow::after {
  content: "";
  border-left: 4px solid transparent;
  border-right: 4px solid transparent;
  border-top: 4px solid #999;
}
.gear {
  width: 15px;
  height: 15px;
  color: #444;
  margin-left: 12px;
}
.stream-ctrl {
  display: flex;
  align-items: center;
  height: 30px;
  margin: 5px 0 7px;
  padding-left: 6px;
}
.stop {
  width: 60px;
  height: 30px;
  box-sizing: border-box;
  background: #fff;
  border: 2px solid #0a70ee;
  border-radius: 4px;
  font: inherit;
  font-size: 12.500px;
  color: #111;
  padding: 0;
}
.pause {
  width: 11px;
  height: 17px;
  margin-left: 12px;
  border-left: 4px solid #111;
  border-right: 4px solid #111;
  box-sizing: border-box;
}
.live {
  width: 20px;
  height: 20px;
  margin-left: 14px;
}
.bell {
  width: 17px;
  height: 22px;
  margin-left: 12px;
}
.buffer-label {
  margin-left: 8px;
  width: 74px;
  font-size: 12.500px;
}
.spin {
  height: 30px;
  box-sizing: border-box;
  background: #fff;
  border: 1px solid #444;
  border-radius: 3px;
  display: flex;
  align-items: stretch;
}
.buffer-spin { width: 60px; }
.spin-val {
  flex: 1;
  padding-left: 6px;
  display: flex;
  align-items: center;
  font-size: 12.500px;
}
.spin-btns {
  width: 15px;
  display: flex;
  flex-direction: column;
  border-left: 1px solid #444;
}
.spin-btns i {
  flex: 1;
  display: flex;
  align-items: center;
  justify-content: center;
}
.spin-btns .up { border-bottom: 1px solid #444; }
.spin-btns .up::after {
  content: "";
  border-left: 5px solid transparent;
  border-right: 5px solid transparent;
  border-bottom: 5px solid #8a8a8a;
}
.spin-btns .down::after {
  content: "";
  border-left: 5px solid transparent;
  border-right: 5px solid transparent;
  border-top: 5px solid #8a8a8a;
}
.pub-list {
  height: 87px;
  padding-top: 3px;
  box-sizing: border-box;
}
.pub-row {
  height: 26.500px;
  display: flex;
  align-items: center;
  padding-left: 6px;
  position: relative;
  font-size: 12.700px;
}
.check {
  width: 14px;
  height: 14px;
  box-sizing: border-box;
  border: 1px solid #444;
  border-radius: 2px;
  background: #f4f4f4;
  display: flex;
  align-items: center;
  justify-content: center;
}
.pub-row .check {
  position: absolute;
  left: 247px;
}
.pub-gear {
  position: absolute;
  left: 274px;
  margin: 0;
}
.checked::after {
  content: "";
  width: 8px;
  height: 8px;
  background: #333;
}
.filter {
  height: 30px;
  box-sizing: border-box;
  margin: 1px 9px 0;
  padding: 6px 8px 0;
  border-bottom: 2px solid #5cbcf6;
  color: #8a8a8a;
  font-size: 12.500px;
}
.list-ctrl {
  height: 51px;
  display: flex;
  align-items: center;
  padding-left: 13px;
  font-size: 12.500px;
}
.trash {
  width: 16px;
  height: 18px;
}
.count {
  width: 87px;
  margin-left: 75px;
}
.list-ctrl .check { margin-left: 39px; }
.values { margin-left: 7px; }

/* Tree */
.tree {
  width: 282px;
  height: 450px;
  box-sizing: border-box;
  margin-left: 9px;
  background: #fff;
  border: 1px solid #333;
  border-radius: 3px;
  display: flex;
  flex-direction: column;
  font-size: 11.800px;
}
.rows { flex: 1; }
.row {
  height: 15px;
  line-height: 15px;
  display: flex;
  align-items: center;
  position: relative;
  white-space: nowrap;
}
.d0 { padding-left: 23px; }
.d1 { padding-left: 43px; }
.d2 { padding-left: 63px; }
.d3 { padding-left: 83px; }
.d4 { padding-left: 103px; }
.arrow {
  position: absolute;
  margin-left: -17px;
  width: 0;
  height: 0;
  border-left: 4px solid transparent;
  border-right: 4px solid transparent;
  border-top: 4px solid #888;
}
.arrow.closed {
  margin-left: -15px;
  border-top: 4px solid transparent;
  border-bottom: 4px solid transparent;
  border-left: 5px solid #888;
  border-right: 0;
}
.val {
  margin-left: auto;
  font-family: "Liberation Mono", monospace;
  font-size: 10px;
  color: #445566;
}
/* branch lines of the tree */
.leaf::before {
  content: "";
  position: absolute;
  top: 0;
  bottom: 0;
  width: 2px;
  background: #999;
}
.leaf::after {
  content: "";
  position: absolute;
  top: 7px;
  height: 1px;
  width: 10px;
  background: #444;
}
.d2.leaf::before { left: 50px; }
.d2.leaf::after { left: 52px; }
.d4.leaf::before {
  left: 70px;
  width: 2px;
  border-right: 1px solid transparent;
  box-shadow: 20px 0 0 -0.500px #666;
}
.d4.leaf::after { left: 91px; }
.sep {
  height: 1px;
  background: #bbb;
  margin: 10px 9px 0;
}
.custom {
  display: flex;
  align-items: center;
  height: 28px;
  margin: 2px 0 0 9px;
  gap: 6px;
}
.custom-label {
  width: 87px;
  flex: none;
  white-space: nowrap;
  font-size: 12px;
}
.tool-btn {
  width: 28px;
  height: 28px;
  box-sizing: border-box;
  background: #fff;
  border: 1px solid #444;
  border-radius: 3px;
  display: flex;
  align-items: center;
  justify-content: center;
}
.tool-btn svg {
  width: 16px;
  height: 16px;
}
.custom-list {
  width: 282px;
  height: 68px;
  box-sizing: border-box;
  margin: 6px 0 0 9px;
  background: #fff;
  border: 1px solid #333;
  border-radius: 3px;
}

/* Tree scrollbar */
.hscroll {
  height: 12px;
  margin-bottom: 1px;
  display: flex;
  align-items: center;
  position: relative;
}
.sb-thumb {
  position: absolute;
  left: 16px;
  width: 224px;
  height: 12px;
  background: #777;
}
.sb-left, .sb-right {
  position: absolute;
  width: 0;
  height: 0;
  border-top: 5px solid transparent;
  border-bottom: 5px solid transparent;
}
.sb-left {
  left: 6px;
  border-right: 5px solid #888;
}
.sb-right {
  right: 4px;
  border-left: 5px solid #777;
}

/* Plot area */
.work {
  flex: 1;
  min-width: 0;
  background: #dcdcdc;
  padding: 0 10px;
  display: flex;
  flex-direction: column;
}
.tabbar {
  height: 44px;
  flex: none;
  display: flex;
  align-items: flex-end;
  position: relative;
}
.tab {
  width: 93px;
  height: 35px;
  box-sizing: border-box;
  margin-bottom: -1px;
  margin-left: 1px;
  background: #fff;
  border: 1px solid #333;
  border-bottom: 0;
  border-radius: 3px 3px 0 0;
  display: flex;
  align-items: center;
  justify-content: space-between;
  padding: 0 7px 0 22px;
  font-size: 12.500px;
  position: relative;
  z-index: 1;
}
.tab-x {
  width: 9px;
  height: 9px;
}
.tab-add {
  margin: 0 0 5px 16px;
  font-size: 19px;
  line-height: 24px;
  color: #222;
}
.tools {
  margin-left: auto;
  margin-bottom: 6px;
  display: flex;
  gap: 6px;
}
.t-ic {
  width: 28px;
  height: 28px;
  box-sizing: border-box;
  display: flex;
  align-items: center;
  justify-content: center;
}
.t-ic > svg {
  width: 26px;
  height: 26px;
}
.boxed {
  border-radius: 4px;
  border: 2px solid #1a78f0;
}
.boxed.off { border: 1px solid #777; }
.boxed > svg {
  width: 22px;
  height: 22px;
}
.t-zero {
  font-size: 23px;
  line-height: 24px;
  color: #888;
}
.t-zero small {
  font-size: 16px;
  vertical-align: -3px;
}
.t-ratio {
  font-size: 15px;
  color: #333;
}
.chart-a {
  font-family: "Noto Sans", sans-serif;
  font-size: 10px;
  font-weight: bold;
  fill: #e62de6;
}
.frame {
  height: 893px;
  box-sizing: border-box;
  flex: none;
  background: #fff;
  border: 1px solid #333;
  border-radius: 2px;
  position: relative;
}
.plot {
  position: absolute;
  left: -1px;
  top: -1px;
  width: 1527px;
  height: 893px;
}
.axis path, .axis line {
  fill: none;
  stroke: #111;
  stroke-width: 1;
}
.axis .minor-y {
  stroke-width: 4;
  stroke-dasharray: 1 22.060;
}
.axis .minor-x {
  stroke-width: 4;
  stroke-dasharray: 1 57.850;
}
.ticks-y text, .ticks-x text {
  font-size: 12.500px;
  fill: #222;
}
.dots {
  font-size: 12px;
  fill: #333;
}
.line-x polyline, .line-y polyline {
  fill: none;
  vector-effect: non-scaling-stroke;
  stroke-linejoin: miter;
}
.line-x polyline {
  stroke: #1f77b4;
  stroke-width: 1.300;
}
.line-y polyline {
  stroke: #dc2a2f;
  stroke-width: 1.300;
}
.plot-close {
  position: absolute;
  left: 1495px;
  top: 20px;
  width: 12px;
  height: 12px;
}
.legend {
  position: absolute;
  left: 1250px;
  top: 49px;
  width: 255px;
  height: 45px;
  box-sizing: border-box;
  background: #fff;
  border: 2px solid #888;
  border-radius: 2px;
  padding: 0 0 0 3px;
  font-size: 11.900px;
  color: #1a1a1a;
}
.legend-row {
  display: flex;
  align-items: center;
  height: 20px;
  white-space: nowrap;
}
.legend-row i {
  flex: none;
  width: 8px;
  height: 8px;
  margin: 0 1px 0 2px;
}
.sw-x { background: #1f77b4; }
.sw-y { background: #d62728; }
.legend-knob {
  position: absolute;
  right: -7px;
  top: -7px;
  width: 10px;
  height: 10px;
  border: 1px solid #222;
  border-radius: 50%;
  background: #fff;
}
.ime {
  position: absolute;
  left: 927px;
  top: 719px;
  display: flex;
  align-items: center;
}
.ime-logo {
  width: 24px;
  height: 24px;
  background: #ef5a1d;
  border-radius: 4px;
  transform: rotate(-8deg);
  color: #fff;
  font-weight: bold;
  font-size: 21px;
  line-height: 24px;
  text-align: center;
  position: relative;
  z-index: 1;
}
.ime-bar {
  width: 108px;
  height: 23px;
  box-sizing: border-box;
  margin-left: -10px;
  background: #fff;
  border: 1px solid #b8bcc8;
  display: flex;
  align-items: center;
  gap: 10px;
  padding-left: 19px;
  color: #1b6fc2;
  font-family: "Noto Sans CJK SC", sans-serif;
  font-size: 14px;
}
.ime-punct { font-weight: bold; width: 14px; }
.ime-bar svg {
  width: 14px;
  height: 14px;
}

/* Playback row */
.bottom {
  display: flex;
  align-items: center;
  height: 40px;
  margin-top: 4px;
  flex: none;
}
.time-box {
  width: 100px;
  height: 30px;
  box-sizing: border-box;
  background: #fff;
  border: 1px solid #333;
  display: flex;
  align-items: center;
  justify-content: center;
  font-size: 12.500px;
}
.player {
  width: 1160px;
  height: 40px;
  flex: none;
  margin-left: 5px;
  background: #eee;
  display: flex;
  align-items: center;
}
.loop {
  width: 22px;
  height: 16px;
  margin-left: 5px;
}
.play {
  width: 15px;
  height: 20px;
  margin-left: 15px;
}
.slider {
  flex: 1;
  height: 10px;
  box-sizing: border-box;
  margin-left: 14px;
  background: #fff;
  border: 1px solid #3c444d;
  border-radius: 5px;
  position: relative;
}
.handle {
  position: absolute;
  left: -1px;
  top: -5px;
  width: 10px;
  height: 17px;
  box-sizing: border-box;
  background: #8e8e8e;
  border: 1px solid #3c444d;
  border-radius: 4px;
}
.b-label {
  font-weight: bold;
  font-size: 12.500px;
}
.speed-label { margin-left: 11px; }
.speed-spin {
  width: 56px;
  margin-left: 7px;
}
.step-label { margin-left: 7px; }
.step-spin {
  width: 71px;
  margin-left: 7px;
}
```
